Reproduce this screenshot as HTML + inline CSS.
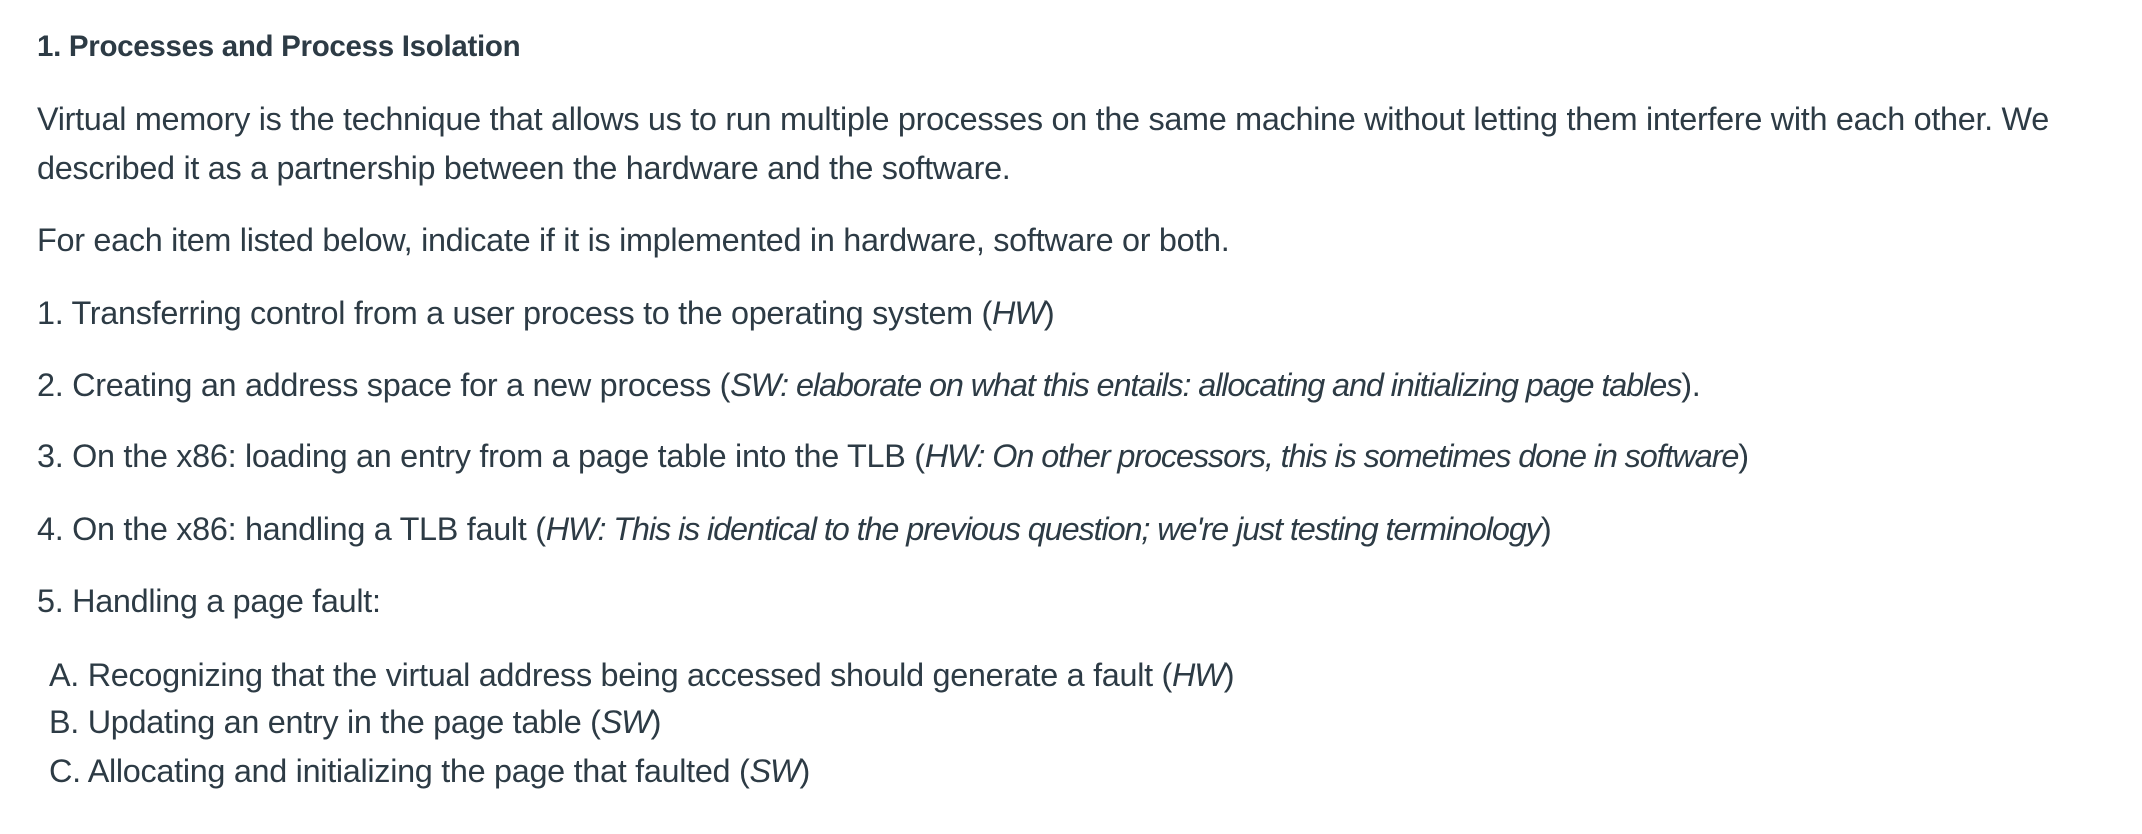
<!DOCTYPE html>
<html><head><meta charset="utf-8"><style>
body{margin:0;width:2142px;height:834px;background:#fff;overflow:hidden;color:#2d3b45;font-family:"Liberation Sans",Arial,sans-serif;}
.l{position:absolute;left:37px;white-space:nowrap;font-size:32.4px;line-height:48px;letter-spacing:-0.3px;}
.h{font-weight:bold;font-size:29.5px;letter-spacing:-0.3px}
.s{left:49px}
i{font-style:italic;letter-spacing:-1.1px}
</style></head><body>
<div class="l h" style="top:23px">1. Processes and Process Isolation</div>
<div class="l" style="top:95px">Virtual memory is the technique that allows us to run multiple processes on the same machine without letting them interfere with each other. We</div>
<div class="l" style="top:144px">described it as a partnership between the hardware and the software.</div>
<div class="l" style="top:216px">For each item listed below, indicate if it is implemented in hardware, software or both.</div>
<div class="l" style="top:289px">1. Transferring control from a user process to the operating system (<i>HW</i>)</div>
<div class="l" style="top:361px">2. Creating an address space for a new process (<i>SW: elaborate on what this entails: allocating and initializing page tables</i>).</div>
<div class="l" style="top:432px">3. On the x86: loading an entry from a page table into the TLB (<i>HW: On other processors, this is sometimes done in software</i>)</div>
<div class="l" style="top:505px">4. On the x86: handling a TLB fault (<i>HW: This is identical to the previous question; we're just testing terminology</i>)</div>
<div class="l" style="top:577px">5. Handling a page fault:</div>
<div class="l s" style="top:651px">A. Recognizing that the virtual address being accessed should generate a fault (<i>HW</i>)</div>
<div class="l s" style="top:698px">B. Updating an entry in the page table (<i>SW</i>)</div>
<div class="l s" style="top:747px">C. Allocating and initializing the page that faulted (<i>SW</i>)</div>
</body></html>
